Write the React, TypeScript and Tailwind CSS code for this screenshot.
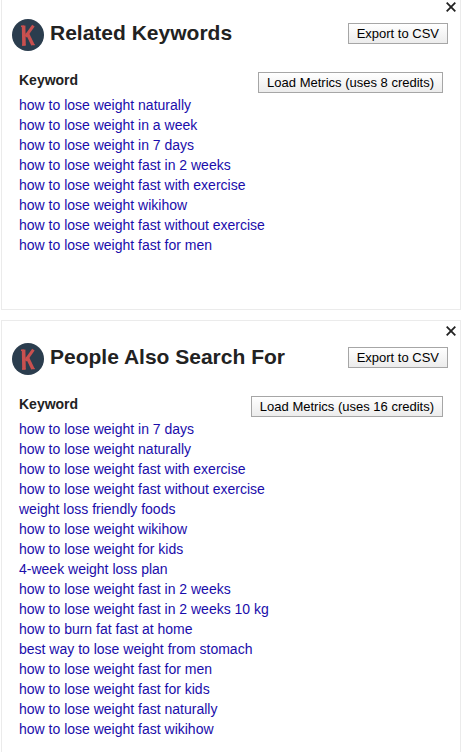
import type { ReactNode } from "react";

interface Widget {
  title: string;
  credits: number;
  keywords: string[];
}

const widgets: Widget[] = [
  {
    title: "Related Keywords",
    credits: 8,
    keywords: [
      "how to lose weight naturally",
      "how to lose weight in a week",
      "how to lose weight in 7 days",
      "how to lose weight fast in 2 weeks",
      "how to lose weight fast with exercise",
      "how to lose weight wikihow",
      "how to lose weight fast without exercise",
      "how to lose weight fast for men",
    ],
  },
  {
    title: "People Also Search For",
    credits: 16,
    keywords: [
      "how to lose weight in 7 days",
      "how to lose weight naturally",
      "how to lose weight fast with exercise",
      "how to lose weight fast without exercise",
      "weight loss friendly foods",
      "how to lose weight wikihow",
      "how to lose weight for kids",
      "4-week weight loss plan",
      "how to lose weight fast in 2 weeks",
      "how to lose weight fast in 2 weeks 10 kg",
      "how to burn fat fast at home",
      "best way to lose weight from stomach",
      "how to lose weight fast for men",
      "how to lose weight fast for kids",
      "how to lose weight fast naturally",
      "how to lose weight fast wikihow",
    ],
  },
];

function Logo() {
  return (
    <svg viewBox="0 0 32 32" className="size-8 shrink-0" aria-hidden="true">
      <circle cx="16" cy="16" r="16" fill="#2b3d4e" />
      <g fill="none" stroke="#c9504f" strokeLinejoin="round">
        <path d="M11.6 6.6 12 26.4" strokeWidth="3.6" />
        <path d="M21.4 6.6 13.6 17.6" strokeWidth="3" />
        <path d="M15 13.8 20.8 25.8" strokeWidth="3.4" />
        <path d="M9 7.2h3M10 26h3.6M19.4 25.6h3.4" strokeWidth="1.4" />
      </g>
    </svg>
  );
}

function ActionButton({ children }: { children: ReactNode }) {
  return (
    <button
      type="button"
      className="h-[21px] shrink-0 border border-[#a6a6a6] bg-linear-to-b from-white to-[#ececec] px-2 text-[13px] leading-[19px] font-normal whitespace-nowrap text-black"
    >
      {children}
    </button>
  );
}

function KeywordWidget({ title, credits, keywords }: Widget) {
  return (
    <section className="relative min-h-[314px] border border-[#ebebeb] bg-white pb-4">
      <button
        type="button"
        aria-label="Close"
        className="absolute top-1 right-[3px] p-px text-[#222]"
      >
        <svg viewBox="0 0 10 10" className="size-[10px]">
          <path d="M.7.7l8.6 8.6M9.3.7L.7 9.3" stroke="currentColor" strokeWidth="1.8" />
        </svg>
      </button>

      <header className="flex items-start pt-[22px] pr-3 pl-[10px]">
        <Logo />
        <h2 className="ml-[6px] flex-1 text-[21px] leading-7 font-bold text-[#222]">
          {title}
        </h2>
        <div className="flex pt-1">
          <ActionButton>Export to CSV</ActionButton>
        </div>
      </header>

      <div className="mt-[19px] px-[17px]">
        <table className="w-full text-left text-sm leading-5">
          <thead>
            <tr className="h-[25px] align-top">
              <th className="p-0 font-bold text-[#222]">Keyword</th>
              <td className="p-0">
                <div className="flex justify-end pt-[2px]">
                  <ActionButton>Load Metrics (uses {credits} credits)</ActionButton>
                </div>
              </td>
            </tr>
          </thead>
          <tbody>
            {keywords.map((keyword) => (
              <tr key={keyword}>
                <td colSpan={2} className="p-0">
                  <a href="#" className="text-[#1a0dab]">
                    {keyword}
                  </a>
                </td>
              </tr>
            ))}
          </tbody>
        </table>
      </div>
    </section>
  );
}

export default function App() {
  return (
    <main className="h-screen overflow-hidden bg-white pl-px font-['Liberation_Sans',Arial,sans-serif]">
      <div className="-mt-1 flex flex-col gap-[10px]">
        {widgets.map((widget) => (
          <KeywordWidget key={widget.title} {...widget} />
        ))}
      </div>
    </main>
  );
}
